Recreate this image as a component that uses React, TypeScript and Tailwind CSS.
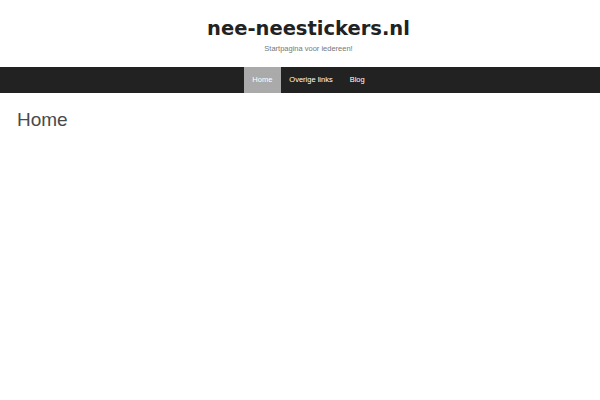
export default function App() {
  return (
    <div className="min-h-[400px] bg-white font-['Liberation_Sans',Arial,sans-serif]">
      <header className="flex flex-col items-center pt-[17px] pb-[13px] pl-[17px]">
        <h1 className="font-['DejaVu_Sans',sans-serif] text-[19.5px] font-bold leading-[24px] text-[#222]">
          nee-neestickers.nl
        </h1>
        <p className="mt-[3px] text-[7.5px] leading-[10px] text-[#777]">Startpagina voor iedereen!</p>
      </header>
      <nav className="flex h-[26px] justify-center bg-[#222] pl-[17px]">
        <a className="flex items-center bg-[#aaa] px-[8.5px] text-[7.5px] text-white">Home</a>
        <a className="flex items-center px-[8.5px] text-[7.5px] text-white">Overige links</a>
        <a className="flex items-center px-[8.5px] text-[7.5px] text-white">Blog</a>
      </nav>
      <main className="px-[17px] pt-[15px]">
        <h2 className="text-[19px] leading-[24px] text-[#4a4a4a]">Home</h2>
      </main>
    </div>
  );
}
